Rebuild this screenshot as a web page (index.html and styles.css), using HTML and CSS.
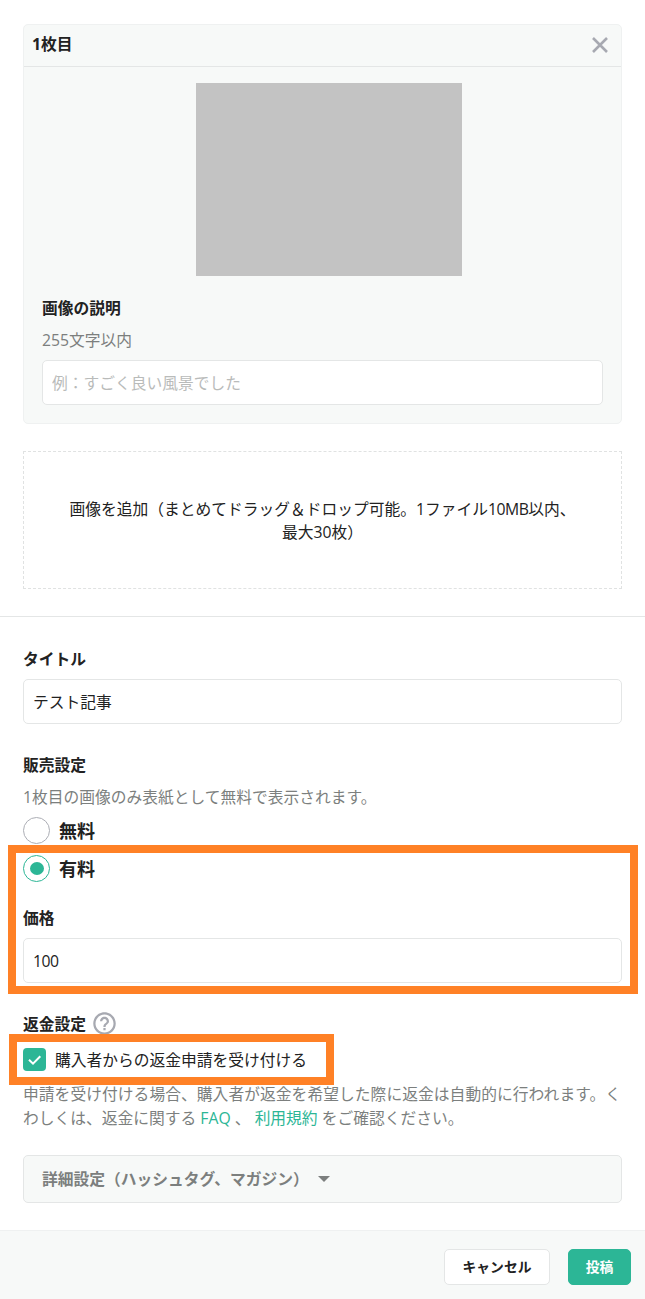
FILE: index.html
```html
<!DOCTYPE html>
<html lang="ja">
<head>
  <meta charset="UTF-8">
  <meta name="viewport" content="width=device-width, initial-scale=1.0">
  <title>画像を投稿</title>
  <link rel="stylesheet" href="styles.css">
</head>
<body>
  <div class="images">
    <div class="card">
      <div class="card-header">
        <span>1枚目</span>
        <svg class="close" viewBox="0 0 18 18"><path d="M2 2L16 16M16 2L2 16"/></svg>
      </div>
      <div class="card-body">
        <div class="preview"></div>
        <label class="label" for="caption">画像の説明</label>
        <p class="hint">255文字以内</p>
        <input class="input" type="text" id="caption" placeholder="例：すごく良い風景でした">
      </div>
    </div>
    <div class="dropzone">画像を追加（まとめてドラッグ＆ドロップ可能。1ファイル<span class="latin">10MB</span>以内、<br>最大30枚）</div>
  </div>

  <div class="settings">
    <div class="field">
      <label class="label" for="title">タイトル</label>
      <input class="input" type="text" id="title" value="テスト記事">
    </div>

    <div class="field">
      <div class="label">販売設定</div>
      <p class="hint">1枚目の画像のみ表紙として無料で表示されます。</p>
      <div class="radio"><span class="radio-mark"></span>無料</div>
      <div class="paid">
        <div class="radio"><span class="radio-mark checked"></span>有料</div>
        <label class="label" for="price">価格</label>
        <input class="input latin" type="text" id="price" value="100">
      </div>
    </div>

    <div class="field">
      <div class="label refund-label">
        返金設定
        <svg class="help" viewBox="0 0 24 24"><path d="M11 18h2v-2h-2v2zm1-16C6.48 2 2 6.48 2 12s4.48 10 10 10 10-4.480 10-10S17.520 2 12 2zm0 18c-4.410 0-8-3.590-8-8s3.590-8 8-8 8 3.590 8 8-3.590 8-8 8zm0-14c-2.210 0-4 1.790-4 4h2c0-1.100.9-2 2-2s2 .9 2 2c0 2-3 1.750-3 5h2c0-2.250 3-2.500 3-5 0-2.210-1.790-4-4-4z"/></svg>
      </div>
      <div class="check">
        <span class="check-mark"><svg viewBox="0 0 23 23"><path d="M6 11.800L10 15.700L17.300 8.300"/></svg></span>
        購入者からの返金申請を受け付ける
      </div>
      <p class="note"><span class="note-line">申請を受け付ける場合、購入者が返金を希望した際に返金は自動的に行われます。く</span><br>わしくは、返金に関する <a href="#">FAQ</a> 、 <a href="#">利用規約</a> をご確認ください。</p>
    </div>

    <div class="details">詳細設定（ハッシュタグ、マガジン）<span class="caret"></span></div>
  </div>

  <div class="footer">
    <button class="btn" type="button">キャンセル</button>
    <button class="btn btn-primary" type="button">投稿</button>
  </div>
</body>
</html>
```
FILE: styles.css
```css
*,
*::before,
*::after {
  box-sizing: border-box;
}
body {
  margin: 0;
  background: #fff;
  color: #222;
  font-family: "Open Sans", "Noto Sans CJK JP", sans-serif;
  font-size: 15.75px;
  line-height: 24px;
}
p {
  margin: 0;
}
.latin {
  letter-spacing: -0.5px;
}
.images {
  padding: 24px 23px 27px;
  border-bottom: 1px solid #e4e6e6;
}
.card {
  border: 1px solid #eff1f1;
  border-radius: 5px;
  background: #f7f9f8;
}
.card-header {
  display: flex;
  justify-content: space-between;
  align-items: center;
  height: 42px;
  padding: 0 12px 3px 8px;
  border-bottom: 1px solid #e4e6e6;
  font-weight: bold;
}
.close {
  width: 18px;
  height: 18px;
  margin-top: 2px;
  fill: none;
  stroke: #a7a9b1;
  stroke-width: 2.6;
}
.card-body {
  padding: 16px 18px 18px;
}
.preview {
  width: 266px;
  height: 193px;
  margin: 0 0 20px 154px;
  background: #c3c3c3;
}
.label {
  display: block;
  margin-bottom: 8px;
  font-weight: bold;
}
.hint {
  margin-bottom: 8px;
  color: #7c7f7e;
}
.input {
  display: block;
  width: 100%;
  height: 45px;
  padding: 0 9px;
  border: 1px solid #e4e6e6;
  border-radius: 5px;
  background: #fff;
  color: #222;
  font: inherit;
}
.input::placeholder {
  color: #b9bbba;
}
.dropzone {
  height: 138px;
  margin-top: 27px;
  padding: 46px 40px;
  border: 1px dashed #e0e2e2;
  line-height: 23px;
  text-align: center;
}
.settings {
  padding: 30px 23px 27px;
}
.field {
  margin-bottom: 29px;
}
.radio {
  display: flex;
  align-items: center;
  gap: 9px;
  height: 27px;
  font-size: 18px;
  line-height: 22px;
  font-weight: bold;
}
.radio-mark {
  width: 27px;
  height: 27px;
  padding: 6px;
  border: 1px solid #acaeb5;
  border-radius: 50%;
}
.radio-mark.checked {
  border-color: #2cb696;
}
.radio-mark.checked::before {
  content: "";
  display: block;
  width: 14px;
  height: 13px;
  border-radius: 50%;
  background: #2cb696;
}
.paid {
  position: relative;
  margin-top: 11px;
}
.paid .label {
  margin-top: 24px;
}
/* orange frames drawn over the form */
.paid::after,
.check::after {
  content: "";
  position: absolute;
  border: 8px solid #ff8126;
  pointer-events: none;
}
.paid::after {
  top: -10px;
  right: -16px;
  bottom: -11px;
  left: -15px;
}
.check::after {
  top: -14px;
  bottom: -14px;
  left: -14px;
  width: 325px;
}
.refund-label {
  display: flex;
  align-items: center;
  gap: 5px;
  margin-bottom: 12px;
}
.help {
  width: 27px;
  height: 27px;
  margin: -4px 0 -2px;
  fill: #a7a9b1;
}
.check {
  position: relative;
  display: flex;
  align-items: center;
  gap: 9px;
  height: 23px;
  margin-bottom: 12px;
}
.check-mark {
  width: 23px;
  height: 23px;
  border-radius: 4px;
  background: #2cb696;
}
.check-mark svg {
  display: block;
  fill: none;
  stroke: #fff;
  stroke-width: 2;
}
.note {
  margin-bottom: -4px;
  color: #7c7f7e;
  line-height: 23.6px;
  white-space: nowrap;
}
.note-line {
  letter-spacing: 0.05px;
}
.note a {
  color: #2cb696;
  text-decoration: none;
}
.details {
  display: flex;
  align-items: center;
  height: 48px;
  padding: 0 18px;
  border: 1px solid #e4e6e6;
  border-radius: 5px;
  background: #f7f9f8;
  color: #7c7f7e;
  font-weight: bold;
}
.caret {
  margin-left: 9px;
  border: 6px solid transparent;
  border-top-color: #7c7f7e;
  border-bottom: 0;
}
.footer {
  display: flex;
  justify-content: flex-end;
  gap: 18px;
  height: 69px;
  padding: 18px 14px 14px;
  border-top: 1px solid #eff1f1;
  background: #f7f9f8;
}
.btn {
  width: 106px;
  height: 36px;
  padding: 0 0 2px;
  border: 1px solid #e4e6e6;
  border-radius: 5px;
  background: #fff;
  color: #222;
  font-family: inherit;
  font-size: 13.8px;
  font-weight: bold;
}
.btn-primary {
  width: 63px;
  border-color: #2cb696;
  background: #2cb696;
  color: #fff;
}
```
